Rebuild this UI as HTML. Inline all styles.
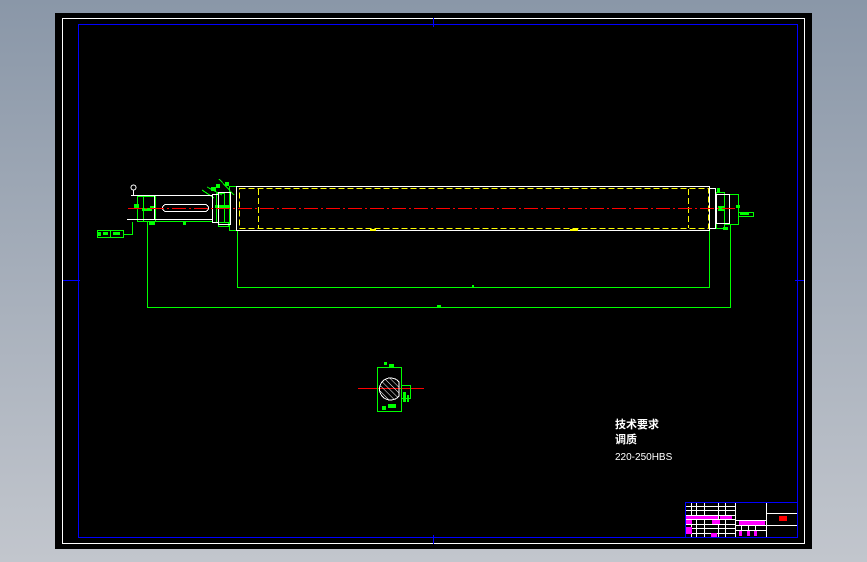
<!DOCTYPE html>
<html><head><meta charset="utf-8"><style>
html,body{margin:0;padding:0;width:867px;height:562px;overflow:hidden;background:linear-gradient(#8a97a8,#c2c6cd);}
svg{position:absolute;left:0;top:0}
</style></head><body>
<svg width="867" height="562" viewBox="0 0 867 562" xmlns="http://www.w3.org/2000/svg" shape-rendering="crispEdges">
<rect x="55" y="13" width="757" height="536" fill="#000"/>
<rect x="62.5" y="18.5" width="742" height="525" fill="none" stroke="#fff" stroke-width="1"/>
<rect x="78.5" y="24.5" width="719" height="513" fill="none" stroke="#0000ff" stroke-width="1.2"/>
<g stroke="#0000ff" stroke-width="1.2">
<line x1="433.5" y1="18" x2="433.5" y2="27"/><line x1="433.5" y1="535" x2="433.5" y2="544"/>
<line x1="63" y1="280.5" x2="80" y2="280.5"/><line x1="795" y1="280.5" x2="804" y2="280.5"/>
</g>
<g fill="none" stroke="#00ff00" stroke-width="1">
<polyline points="147.5,221 147.5,307.5 730.5,307.5 730.5,224"/>
<polyline points="237.5,230 237.5,287.5 709.5,287.5 709.5,230"/>
<rect x="97.5" y="230.5" width="26" height="7"/>
<line x1="110.5" y1="230.5" x2="110.5" y2="237.5"/>
<polyline points="123,234.5 132.5,234.5 132.5,222"/>
<rect x="137.5" y="196.5" width="18" height="25"/>
<line x1="143.5" y1="196.5" x2="143.5" y2="221.5"/>
<polyline points="155.5,221.5 212.5,221.5 212.5,194"/>
<rect x="216.5" y="193.5" width="8" height="29"/>
<rect x="229.5" y="186.5" width="7" height="44"/>
<rect x="218.5" y="222.5" width="10" height="4"/>
<rect x="716.5" y="192.5" width="8" height="36"/>
<rect x="724.5" y="194.5" width="14" height="30"/>
<rect x="738.5" y="212.5" width="15" height="4"/>
<line x1="202" y1="190" x2="214" y2="198"/><line x1="219" y1="179" x2="234" y2="195"/><line x1="207" y1="187" x2="222" y2="195"/>
</g>
<g fill="#00ff00">
<rect x="134" y="204" width="5" height="5"/><rect x="142" y="208" width="10" height="3"/><rect x="150" y="206" width="6" height="3"/>
<rect x="211" y="187" width="5" height="4"/><rect x="216" y="184" width="4" height="4"/><rect x="225" y="182" width="4" height="4"/>
<rect x="215" y="205" width="8" height="3"/><rect x="223" y="205" width="7" height="4"/>
<rect x="149" y="222" width="6" height="3"/><rect x="183" y="222" width="3" height="3"/>
<rect x="437" y="305" width="4" height="2"/><rect x="472" y="285" width="2" height="2"/>
<rect x="718" y="206" width="6" height="5"/><rect x="736" y="205" width="4" height="3"/><rect x="723" y="227" width="5" height="3"/><rect x="717" y="188" width="3" height="4"/>
<rect x="98" y="232" width="3" height="4"/><rect x="103" y="232" width="5" height="3"/><rect x="113" y="232" width="7" height="3"/>
<rect x="740" y="213" width="9" height="2"/>
</g>
<g fill="none" stroke="#fff" stroke-width="1">
<polyline points="131,195.5 212,195.5"/><polyline points="127,219.5 212,219.5"/>
<line x1="154.5" y1="196" x2="154.5" y2="219"/>
<rect x="162.5" y="204.5" width="46" height="7" rx="3.5"/>
<rect x="212.5" y="194.5" width="6" height="28"/>
<rect x="218.5" y="192.5" width="12" height="32"/>
<rect x="236.5" y="186.5" width="473" height="44"/>
<rect x="709.5" y="188.5" width="6" height="40"/>
<rect x="716.5" y="194.5" width="13" height="29"/>
<circle cx="133.5" cy="187.5" r="2.5"/><line x1="133.5" y1="190" x2="133.5" y2="196"/>
</g>
<rect x="370" y="229" width="6" height="2" fill="#ffff00"/><rect x="570" y="229" width="8" height="2" fill="#ffff00"/>
<g fill="none" stroke="#ffff00" stroke-width="1" stroke-dasharray="6,3">
<rect x="239.5" y="188.5" width="469" height="40"/>
<line x1="258.5" y1="189" x2="258.5" y2="228"/>
<line x1="688.5" y1="189" x2="688.5" y2="228"/>
</g>
<line x1="128" y1="208.5" x2="735" y2="208.5" stroke="#ff0000" stroke-width="1" stroke-dasharray="14,3,2,3"/>
<line x1="358" y1="388.5" x2="424" y2="388.5" stroke="#ff0000"/>
<rect x="377.5" y="367.5" width="24" height="44" fill="none" stroke="#00ff00"/>
<rect x="401.5" y="385.5" width="9" height="13" fill="none" stroke="#00ff00"/>
<defs><pattern id="h" width="4" height="4" patternUnits="userSpaceOnUse" patternTransform="rotate(-45)"><line x1="0" y1="0" x2="0" y2="4" stroke="#fff" stroke-width="1.2"/></pattern></defs>
<path d="M399,382 A11,11 0 1 0 399,396 Z" fill="url(#h)" stroke="#fff"/>
<g fill="#00ff00"><rect x="384" y="362" width="3" height="3"/><rect x="389" y="364" width="5" height="3"/><rect x="382" y="406" width="4" height="4"/><rect x="388" y="404" width="8" height="4"/><rect x="403" y="392" width="3" height="10"/><rect x="407" y="395" width="2" height="7"/></g>
<g fill="#fff" font-family="Liberation Sans, Noto Sans CJK SC, sans-serif" font-size="11" font-weight="bold">
<text x="615" y="428">技术要求</text><text x="615" y="443">调质</text><text x="615" y="460" font-size="10" font-weight="normal">220-250HBS</text>
</g>
<rect x="685.5" y="502.5" width="112" height="35" fill="none" stroke="#0000ff"/>
<g stroke="#fff" stroke-width="1">
<line x1="686" y1="506.5" x2="736" y2="506.5"/><line x1="686" y1="510.5" x2="736" y2="510.5"/><line x1="686" y1="515.5" x2="736" y2="515.5"/><line x1="686" y1="519.5" x2="736" y2="519.5"/><line x1="686" y1="524.5" x2="736" y2="524.5"/><line x1="686" y1="528.5" x2="736" y2="528.5"/><line x1="686" y1="533.5" x2="736" y2="533.5"/>
<line x1="691.5" y1="503" x2="691.5" y2="537"/><line x1="696.5" y1="503" x2="696.5" y2="537"/><line x1="704.5" y1="503" x2="704.5" y2="537"/><line x1="718.5" y1="503" x2="718.5" y2="537"/><line x1="725.5" y1="503" x2="725.5" y2="537"/><line x1="735.5" y1="503" x2="735.5" y2="537"/><line x1="766.5" y1="503" x2="766.5" y2="537"/>
<line x1="736" y1="520.5" x2="766" y2="520.5"/><line x1="736" y1="525.5" x2="766" y2="525.5"/><line x1="736" y1="530.5" x2="766" y2="530.5"/>
<line x1="741.5" y1="521" x2="741.5" y2="530"/><line x1="748.5" y1="521" x2="748.5" y2="530"/><line x1="755.5" y1="521" x2="755.5" y2="530"/>
<line x1="767" y1="513.5" x2="797" y2="513.5"/><line x1="767" y1="525.5" x2="797" y2="525.5"/>
</g>
<g fill="#ff00ff"><rect x="686" y="516" width="32" height="3"/><rect x="720" y="516" width="12" height="3"/><rect x="686" y="520" width="6" height="4"/><rect x="712" y="520" width="8" height="4"/><rect x="686" y="527" width="6" height="7"/><rect x="711" y="533" width="6" height="4"/><rect x="739" y="521" width="26" height="4"/><rect x="739" y="531" width="3" height="5"/><rect x="747" y="531" width="3" height="5"/><rect x="754" y="531" width="3" height="5"/></g>
<rect x="779" y="516" width="8" height="5" fill="#ff0000"/>
</svg>
</body></html>
